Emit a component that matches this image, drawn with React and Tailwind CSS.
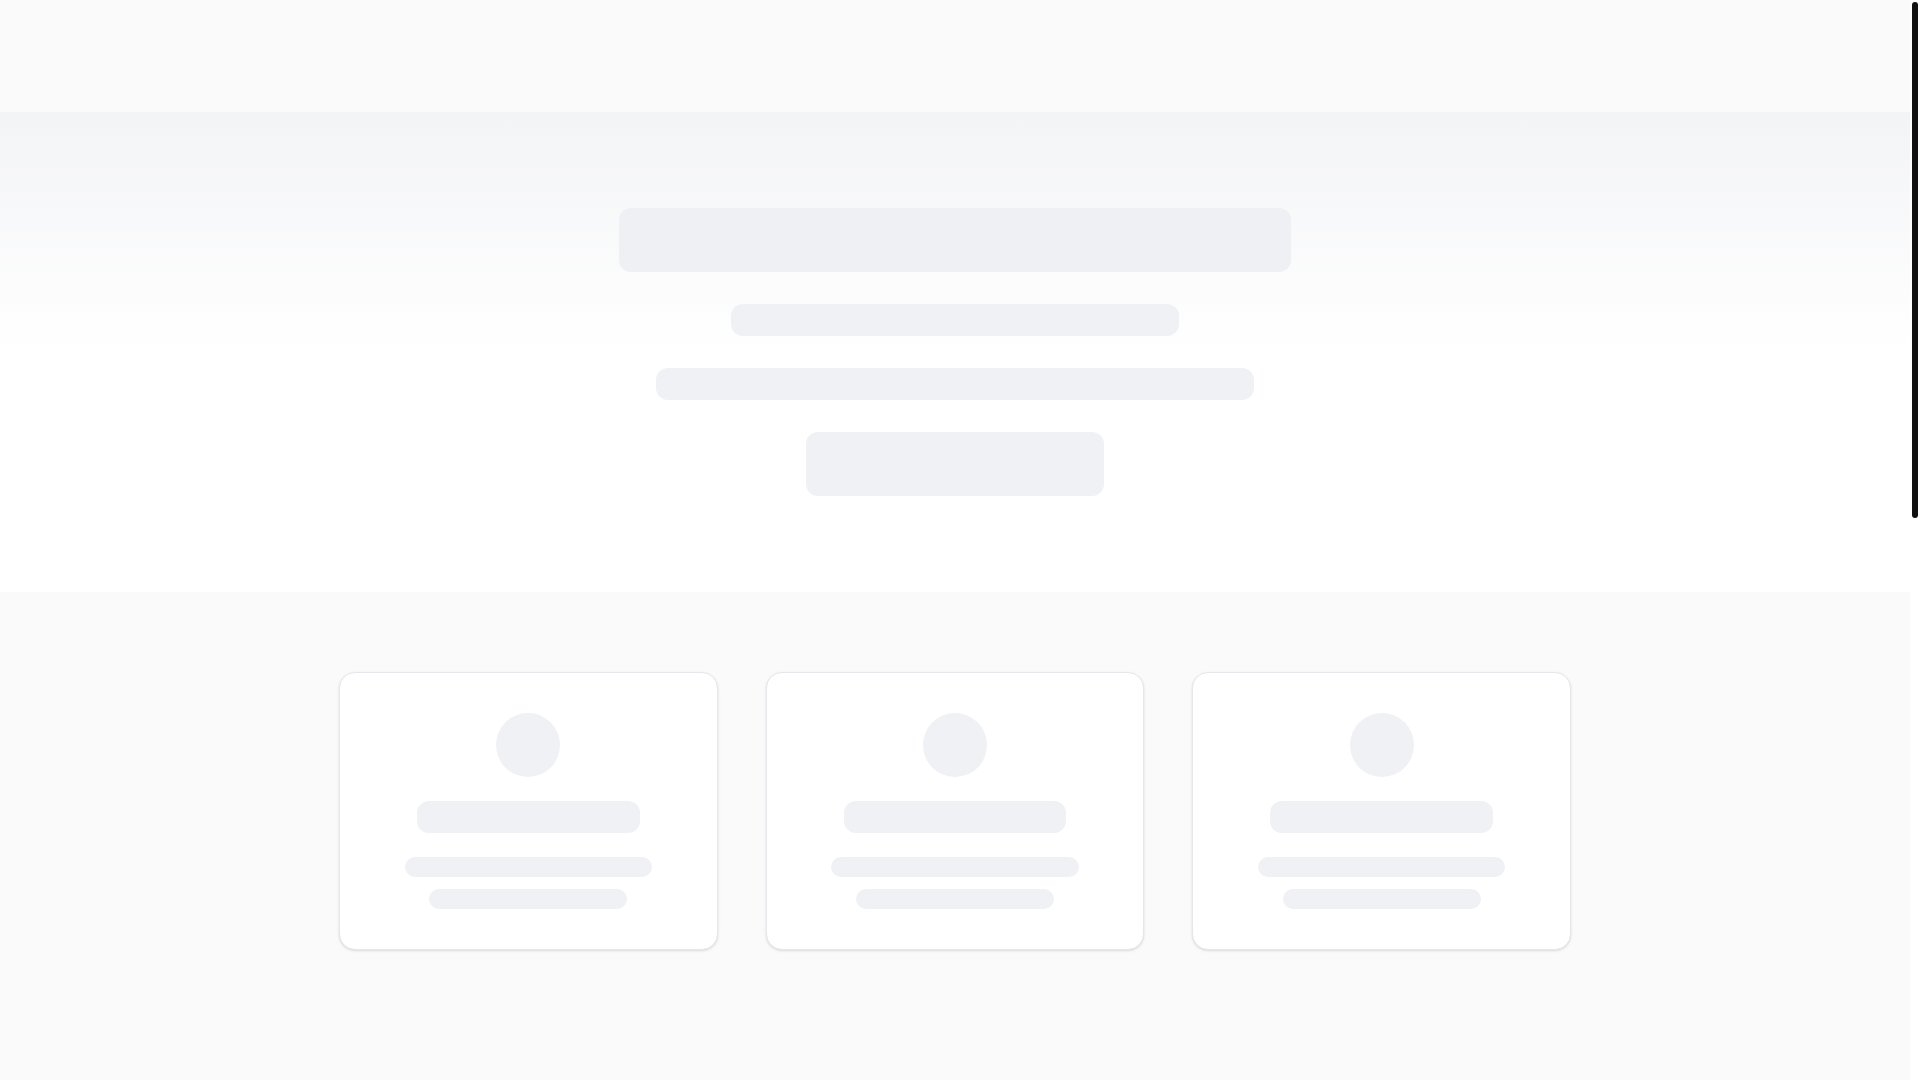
import React from "react";

function Card() {
  return (
    <div className="bg-white border border-gray-200 rounded-2xl shadow-sm p-10 flex flex-col items-center">
      <div className="w-16 h-16 rounded-full bg-[#f0f1f4] mb-6" />
      <div className="w-3/4 h-8 rounded-xl bg-[#f0f1f4] mb-6" />
      <div className="w-5/6 h-5 rounded-full bg-[#f0f1f4] mb-3" />
      <div className="w-2/3 h-5 rounded-full bg-[#f0f1f4]" />
    </div>
  );
}

export default function App() {
  return (
    <div className="h-screen flex bg-white">
      <div className="flex-1 h-full overflow-y-auto">
        <header className="h-[112px] bg-[#fafafa]" />

        <section className="bg-gradient-to-b from-[#f3f4f6] via-white to-white py-24 flex flex-col items-center">
          <div className="w-[672px] h-16 rounded-xl bg-[#eff0f3] mb-8" />
          <div className="w-[448px] h-8 rounded-xl bg-[#f0f1f4] mb-8" />
          <div className="w-[598px] h-8 rounded-xl bg-[#f0f1f4] mb-8" />
          <div className="w-[298px] h-16 rounded-xl bg-[#f0f1f4]" />
        </section>

        <section className="bg-[#fafafa] py-20">
          <div className="max-w-7xl mx-auto px-6 grid grid-cols-3 gap-12">
            <Card />
            <Card />
            <Card />
          </div>
        </section>

        <section className="bg-[#fafafa] h-[1200px]" />
      </div>

      <div className="w-[10px] h-full bg-white flex flex-col items-center pt-[2px]">
        <div className="w-[6px] h-[516px] rounded-full bg-[#111111]" />
      </div>
    </div>
  );
}
